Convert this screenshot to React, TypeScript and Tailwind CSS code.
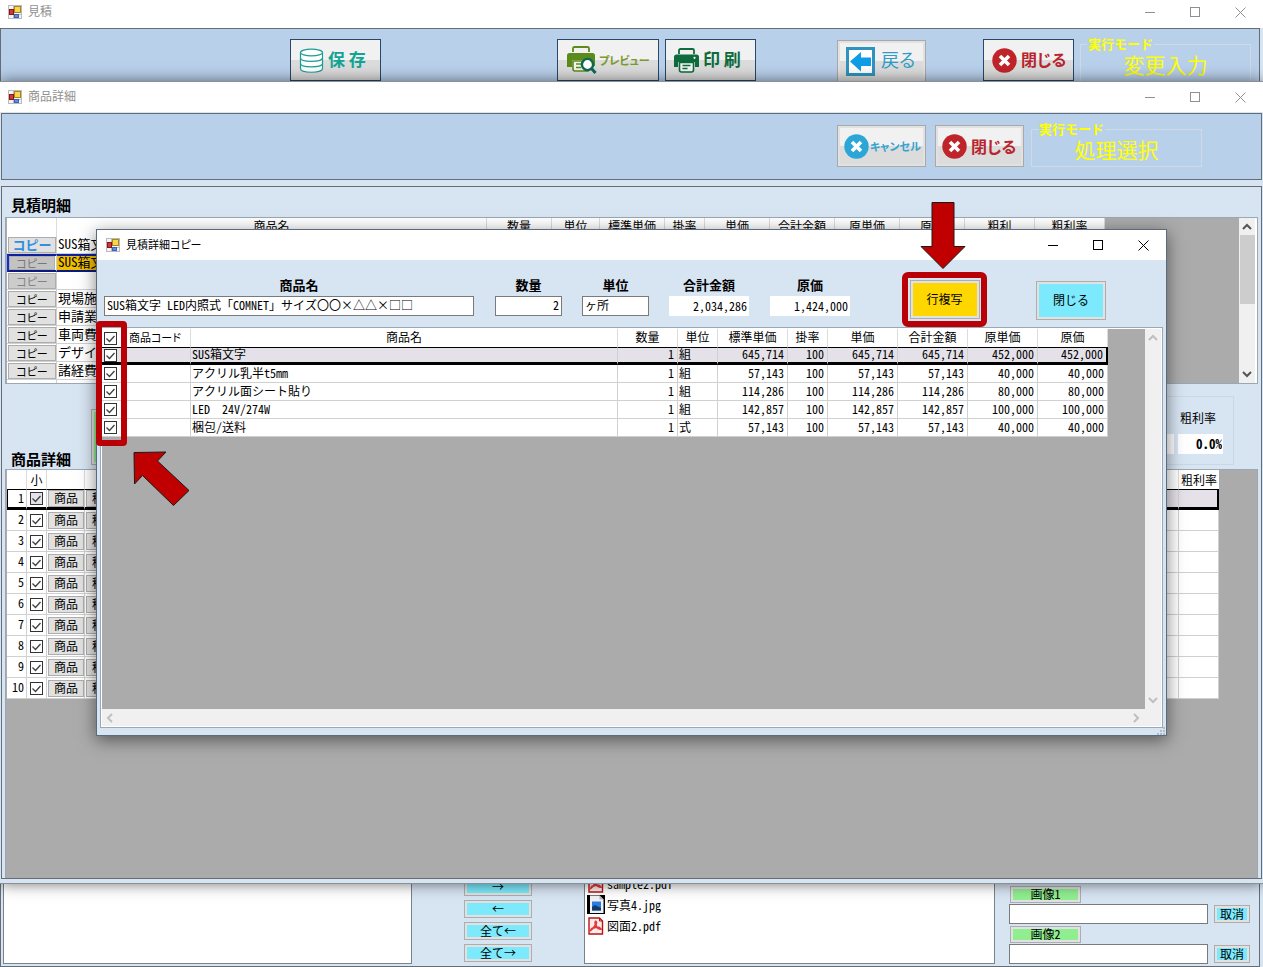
import React from "react";

function AppIcon() {
  return (
    <svg width="14" height="14" viewBox="0 0 14 14" className="shrink-0" aria-hidden="true">
      <rect x="0.5" y="0.5" width="13" height="13" fill="#f4f4f6" stroke="#b9b9be" />
      <path d="M5.5 1v12M1 9.5h12" stroke="#b9b9be" />
      <rect x="1.5" y="4.5" width="4" height="5" fill="#c93a3a" stroke="#8c1515" />
      <rect x="6.5" y="1.5" width="6" height="6" fill="#f9d54a" stroke="#a8861c" />
      <rect x="6.5" y="9.5" width="4" height="3" fill="#5b8fe8" stroke="#3c63b4" />
    </svg>
  );
}

function TitleBar({ title, active = false, className = "" }: { title: string; active?: boolean; className?: string }) {
  const tone = active ? "text-black" : "text-[#909090]";
  const size = active ? "text-[11px]" : "text-xs";
  return (
    <header className={`flex shrink-0 items-center bg-white ${tone} ${className}`}>
      <AppIcon />
      <h1 className={`ml-1.5 flex-1 pb-0.5 [font-family:'Noto_Sans_CJK_JP',sans-serif] leading-4 [font-feature-settings:'palt'] ${size}`}>{title}</h1>
      <button type="button" aria-label="最小化" className="flex h-6 w-[45px] items-center justify-center">
        <svg width="11" height="11"><path d="M0 5.5h10" stroke="currentColor" /></svg>
      </button>
      <button type="button" aria-label="最大化" className="flex h-6 w-[45px] items-center justify-center">
        <svg width="11" height="11"><rect x="0.5" y="0.5" width="9" height="9" fill="none" stroke="currentColor" /></svg>
      </button>
      <button type="button" aria-label="ウィンドウを閉じる" className="flex h-6 w-[45px] items-center justify-center">
        <svg width="11" height="11"><path d="M0.5 0.5l10 10M10.5 0.5l-10 10" stroke="currentColor" /></svg>
      </button>
    </header>
  );
}

function Check({ label, dim = false }: { label: string; dim?: boolean }) {
  return (
    <span className="relative block size-[13px]">
      <input
        type="checkbox"
        defaultChecked
        aria-label={label}
        className={`block size-[13px] appearance-none border border-[#333333] ${dim ? "bg-[#e4e2e8]" : "bg-white"}`}
      />
      <svg viewBox="0 0 13 13" className="pointer-events-none absolute inset-0 size-[13px]">
        <path d="M2.5 6.5l3 3 5-5.5" fill="none" stroke="#404040" strokeWidth="1.3" />
      </svg>
    </span>
  );
}

function Circled({ color }: { color: string }) {
  return (
    <svg width="25" height="25" viewBox="0 0 25 25" className="shrink-0">
      <circle cx="12.5" cy="12.5" r="12.2" fill={color} />
      <path d="M8 8l9 9M17 8l-9 9" stroke="#fff" strokeWidth="3.6" />
    </svg>
  );
}

function DatabaseIcon() {
  return (
    <svg width="25" height="25" viewBox="0 0 25 25" fill="#fff" stroke="#1a9f93" strokeWidth="1.2" className="shrink-0">
      <path d="M1.5 4.5v16c0 5 22 5 22 0v-16" />
      <ellipse cx="12.5" cy="4.5" rx="11" ry="3.4" />
      <path d="M1.5 10c0 4.5 22 4.5 22 0M1.5 15.5c0 4.5 22 4.5 22 0" fill="none" />
    </svg>
  );
}

function PrinterIcon() {
  return (
    <svg width="25" height="25" viewBox="0 0 25 25" className="shrink-0">
      <path d="M5 6V2.500Q5 1 6.500 1h12Q20 1 20 2.500V6" fill="none" stroke="#0d6b3c" strokeWidth="1.8" />
      <path d="M2.5 6.500h20Q25 6.500 25 9v10h-4v-6h-17v6H0V9q0-2.500 2.500-2.500z" fill="#0d6b3c" />
      <path d="M0 9h25v5H0z" fill="#0d6b3c" />
      <circle cx="20.5" cy="9.8" r="1.100" fill="#fff" />
      <path d="M5.500 14.500h14V22q0 2-2 2h-10q-2 0-2-2z" fill="#f4f4f4" stroke="#0d6b3c" strokeWidth="1.600" />
      <path d="M8.500 17.500h8M8.500 20.500h5" stroke="#0d6b3c" strokeWidth="1.400" />
    </svg>
  );
}

function PreviewIcon() {
  return (
    <svg width="30" height="28" viewBox="0 0 30 28" className="shrink-0">
      <path d="M6 6V2.500Q6 1 7.500 1h13Q22 1 22 2.500V6" fill="none" stroke="#5c8a1c" strokeWidth="1.800" />
      <path d="M2.500 7h23Q28 7 28 9.500V20h-5v-6H5v7H0V9.500Q0 7 2.500 7z" fill="#5c8a1c" />
      <path d="M6 15h15v10H8q-2 0-2-2z" fill="#f4f4f4" stroke="#5c8a1c" strokeWidth="1.600" />
      <path d="M9 18h5M9 21.500h5" stroke="#5c8a1c" strokeWidth="1.400" />
      <circle cx="20.500" cy="18.500" r="5.600" fill="#fff" stroke="#0c6a52" strokeWidth="2.400" />
      <path d="M24.500 22.500l4 4.500" stroke="#0c6a52" strokeWidth="3" />
    </svg>
  );
}

function BackIcon() {
  return (
    <svg width="29" height="29" viewBox="0 0 29 29" className="shrink-0">
      <rect x="1.500" y="1.500" width="26" height="26" fill="#fff" stroke="#2f93bd" strokeWidth="3" />
      <path d="M4 14.500L15 5v5.500h10v8.500H15v5.500z" fill="#0e9de6" />
    </svg>
  );
}

const GLOSS = "bg-[linear-gradient(#f1f1f1_50%,#dcdcdc_50%)]";
const SHINE = "[font-family:'Noto_Sans_CJK_JP',sans-serif] font-bold";

function ToolButton({ flat = false, className = "", children }: { flat?: boolean; className?: string; children: React.ReactNode }) {
  const frame = flat ? "border-[#a9a9a9] ring-2 ring-inset ring-[#e1e1e1]" : "border-[#27486b]";
  return (
    <button type="button" className={`flex h-[42px] shrink-0 items-center border whitespace-nowrap ${frame} ${GLOSS} ${SHINE} ${className}`}>
      {children}
    </button>
  );
}

function ModeBox({ value, className = "" }: { value: string; className?: string }) {
  return (
    <fieldset className={`h-[45px] w-[171px] shrink-0 border border-[#d0dae4] text-[#ffff00] ${className}`}>
      <legend className="ml-1.5 px-px text-[13px] leading-[14px] font-bold">実行モード</legend>
      <output className="block pt-px text-center text-[21px] leading-6 font-medium">{value}</output>
    </fieldset>
  );
}

function Chevron({ dir, className = "" }: { dir: "up" | "down" | "left" | "right"; className?: string }) {
  const d = {
    up: "M1 7l4-4 4 4",
    down: "M1 3l4 4 4-4",
    left: "M7 1L3 5l4 4",
    right: "M3 1l4 4-4 4",
  }[dir];
  return (
    <svg width="10" height="10" viewBox="0 0 10 10" className={className}>
      <path d={d} fill="none" stroke="currentColor" strokeWidth="2" />
    </svg>
  );
}

const LINE_COLS = [65, 48, 65, 40, 65, 65, 65, 65, 70, 70];
const LINE_HEADS = ["数量", "単位", "標準単価", "掛率", "単価", "合計金額", "原単価", "原価", "粗利", "粗利率"];
const LINES = [
  { name: "SUS箱文字", state: "focus" },
  { name: "SUS箱文字", state: "selected" },
  { name: "", state: "disabled" },
  { name: "現場施工", state: "" },
  { name: "申請業務", state: "" },
  { name: "車両費", state: "" },
  { name: "デザイン", state: "" },
  { name: "諸経費", state: "" },
];

function LinesGrid() {
  return (
    <div className="mx-[3px] flex h-[167px] overflow-hidden border border-[#9aa7b4] bg-[#ababab] pl-px">
      <div className="min-w-0 flex-1 overflow-hidden pr-[134px]">
        <table className="w-full table-fixed border-separate border-spacing-0 bg-white text-xs leading-3">
          <colgroup>
            <col style={{ width: 50 }} />
            <col />
            {LINE_COLS.map((w, i) => <col key={i} style={{ width: w }} />)}
          </colgroup>
          <thead>
            <tr className="h-[18px]">
              <th className="border-r border-[#dcdcdc] p-0" />
              <th className="border-r border-[#dcdcdc] p-0 pb-0.5 font-normal">商品名</th>
              {LINE_HEADS.map((h) => <th key={h} className="border-r border-[#dcdcdc] p-0 pb-0.5 font-normal">{h}</th>)}
            </tr>
          </thead>
          <tbody>
            {LINES.map((r, i) => {
              const sel = r.state === "selected";
              const edge = sel ? "border-t-2 border-b-2 border-t-[#10209a] border-b-[#0a1a80]" : "border-b border-b-[#d0d0d0]";
              const btn =
                r.state === "focus" ? "bg-[#e1e1e1] text-[#2f8fe0] text-[13px] font-bold"
                : sel ? "bg-[#c3c3c3] text-[#777777] text-[11px] [font-feature-settings:'palt']"
                : r.state === "disabled" ? "bg-[#cccccc] text-[#838383] text-[11px] [font-feature-settings:'palt']"
                : "bg-[#e1e1e1] text-[11px] [font-feature-settings:'palt']";
              return (
                <tr key={i} className="h-[18px]">
                  <td className={`border-r border-r-[#d0d0d0] p-0 ${edge} ${sel ? "border-l-2 border-l-[#1030d0]" : ""}`}>
                    <button
                      type="button"
                      className={`block border border-[#adadad] [font-family:'Noto_Sans_CJK_JP',sans-serif] ${sel ? "h-[14px] w-[46px] leading-3" : "ml-px h-4 w-[48px] leading-[14px]"} ${btn}`}
                    >
                      コピー
                    </button>
                  </td>
                  <td className={`overflow-hidden border-r border-r-[#d0d0d0] p-0 pb-0.5 pl-px text-[13px] whitespace-nowrap ${edge} ${sel ? "bg-[#f0c000]" : ""}`}>{r.name}</td>
                  {LINE_COLS.map((_, c) => <td key={c} className={`border-r border-r-[#d0d0d0] p-0 ${edge} ${sel ? "bg-[#f0c000]" : ""}`} />)}
                </tr>
              );
            })}
            <tr className="h-[18px]">
              <td className="border-r border-[#d0d0d0] p-0" />
              <td colSpan={11} className="p-0" />
            </tr>
          </tbody>
        </table>
      </div>
      <div className="flex w-[18px] flex-col items-center border-r-2 border-white bg-[#f0f0f0] pt-1 pb-1 text-[#555555]">
        <Chevron dir="up" />
        <div className="mt-[3px] h-[69px] w-[15px] bg-[#cdcdcd]" />
        <Chevron dir="down" className="mt-auto" />
      </div>
    </div>
  );
}

function DetailGrid() {
  return (
    <div className="mx-[3px] min-h-0 flex-1 overflow-hidden border border-b-0 border-[#9aa7b4] bg-[#ababab] pr-[38px] pl-px">
      <table className="w-full table-fixed border-separate border-spacing-0 bg-white text-xs leading-[14px]">
        <colgroup>
          <col style={{ width: 20 }} />
          <col style={{ width: 20 }} />
          <col style={{ width: 38 }} />
          <col style={{ width: 38 }} />
          <col />
          <col style={{ width: 40 }} />
        </colgroup>
        <thead>
          <tr className="h-[19px]">
            <th className="border-r border-[#dcdcdc] p-0" />
            <th className="border-r border-[#dcdcdc] p-0 font-normal">小</th>
            <th className="border-r border-[#dcdcdc] p-0" />
            <th className="border-r border-[#dcdcdc] p-0" />
            <th className="border-r border-[#dcdcdc] p-0" />
            <th className="p-0 font-normal">粗利率</th>
          </tr>
        </thead>
        <tbody>
          {Array.from({ length: 10 }, (_, i) => {
            const first = i === 0;
            const edge = first ? "border-t border-b-[3px] border-t-black border-b-black" : "border-b border-b-[#d0d0d0]";
            const fill = first ? "bg-[#e4e2e8]" : "";
            const btn = "block h-[17px] w-[36px] border border-[#adadad] bg-[#e1e1e1] pb-px leading-[14px]";
            return (
              <tr key={i} className="h-[21px]">
                <td className={`border-r border-r-[#d0d0d0] p-0 pr-0.5 pb-0.5 text-right ${edge} ${first ? "border-l border-l-black" : ""}`}>{i + 1}</td>
                <td className={`border-r border-r-[#d0d0d0] p-0 pl-[3px] ${edge}`}><Check label={`小 ${i + 1}`} dim={first} /></td>
                <td className={`border-r border-r-[#d0d0d0] p-0 pl-px ${edge}`}><button type="button" className={btn}>商品</button></td>
                <td className={`border-r border-r-[#d0d0d0] p-0 pl-px ${edge}`}><button type="button" className={btn}>積算</button></td>
                <td className={`border-r border-r-[#d0d0d0] p-0 ${edge} ${fill}`} />
                <td className={`p-0 ${edge} ${fill} ${first ? "border-r-2 border-r-black" : "border-r border-r-[#d0d0d0]"}`} />
              </tr>
            );
          })}
        </tbody>
      </table>
    </div>
  );
}

const COPY_COLS = [60, 40, 70, 40, 70, 70, 70, 70];
const COPY_HEADS = ["数量", "単位", "標準単価", "掛率", "単価", "合計金額", "原単価", "原価"];
const COPY_ROWS = [
  ["SUS箱文字", "1", "組", "645,714", "100", "645,714", "645,714", "452,000", "452,000"],
  ["アクリル乳半t5mm", "1", "組", "57,143", "100", "57,143", "57,143", "40,000", "40,000"],
  ["アクリル面シート貼り", "1", "組", "114,286", "100", "114,286", "114,286", "80,000", "80,000"],
  ["LED　24V/274W", "1", "組", "142,857", "100", "142,857", "142,857", "100,000", "100,000"],
  ["梱包/送料", "1", "式", "57,143", "100", "57,143", "57,143", "40,000", "40,000"],
];

function CopyGrid() {
  return (
    <div className="mx-[3px] mb-[7px] flex min-h-0 flex-1 flex-col border border-[#9aa7b4] bg-white p-px">
      <div className="flex min-h-0 flex-1">
        <div className="min-w-0 flex-1 bg-[#ababab] pr-[37px]">
          <table className="w-full table-fixed border-separate border-spacing-0 bg-white text-xs leading-3">
            <colgroup>
              <col style={{ width: 18 }} />
              <col style={{ width: 71 }} />
              <col />
              {COPY_COLS.map((w, i) => <col key={i} style={{ width: w }} />)}
            </colgroup>
            <thead>
              <tr className="h-[18px]">
                <th className="p-0 pl-0.5"><Check label="すべて選択" /></th>
                <th className="border-r border-[#dcdcdc] p-0 pb-0.5 [font-family:'Noto_Sans_CJK_JP',sans-serif] text-[11px] font-normal [font-feature-settings:'palt']">商品コード</th>
                <th className="border-r border-[#dcdcdc] p-0 pb-0.5 font-normal">商品名</th>
                {COPY_HEADS.map((h) => <th key={h} className="border-r border-[#dcdcdc] p-0 pb-0.5 font-normal">{h}</th>)}
              </tr>
            </thead>
            <tbody>
              {COPY_ROWS.map((row, i) => {
                const first = i === 0;
                const edge = first
                  ? "border-t border-b-[3px] border-t-black border-b-black bg-[#e4e2e8]"
                  : "border-b border-b-[#d0d0d0]";
                return (
                  <tr key={i} className="h-[18px]">
                    <td className={`p-0 pl-0.5 ${edge}`}><Check label={row[0]} /></td>
                    <td className={`border-r border-r-[#d0d0d0] p-0 ${edge}`} />
                    {row.map((v, c) => (
                      <td
                        key={c}
                        className={`p-0 pb-0.5 whitespace-nowrap ${edge} ${first && c === 8 ? "border-r-2 border-r-black" : "border-r border-r-[#d0d0d0]"} ${c === 0 || c === 2 ? "pl-px text-left" : "pr-[3px] text-right"}`}
                      >
                        {v}
                      </td>
                    ))}
                  </tr>
                );
              })}
            </tbody>
          </table>
        </div>
        <div className="flex w-4 flex-col items-center justify-between bg-[#f0f0f0] py-1 text-[#bfbfbf]">
          <Chevron dir="up" />
          <Chevron dir="down" />
        </div>
      </div>
      <div className="flex h-[17px] items-center justify-between bg-[#f0f0f0] pr-[20px] pl-[3px] text-[#bfbfbf]">
        <Chevron dir="left" />
        <Chevron dir="right" />
      </div>
    </div>
  );
}

function Field({ id, label, value, boxed, right, labelClass = "", className }: { id: string; label: string; value: string; boxed?: boolean; right?: boolean; labelClass?: string; className: string }) {
  return (
    <div className={`flex flex-col pb-[11px] ${className}`}>
      <label htmlFor={id} className={`pb-[3px] text-center text-[13px] leading-4 font-bold ${labelClass}`}>{label}</label>
      <input
        id={id}
        defaultValue={value}
        readOnly={!boxed}
        className={`h-5 w-full bg-white px-0.5 text-xs leading-4 ${boxed ? "border border-[#7a7a7a] pb-1" : "pb-px"} ${right ? "text-right" : ""}`}
      />
    </div>
  );
}

function CopyDialog() {
  return (
    <section
      role="dialog"
      aria-label="見積詳細コピー"
      className="absolute inset-x-24 top-[229px] flex h-[507px] flex-col border border-[#5b6b7b] bg-[#d7e4f2] shadow-[0_4px_16px_rgba(0,0,0,0.5)]"
    >
      <TitleBar title="見積詳細コピー" active className="h-[30px] pl-[9px]" />
      <div className="flex h-[67px] shrink-0 items-end pr-[60px] pl-[7px]">
        <Field id="name" label="商品名" value="SUS箱文字 LED内照式「COMNET」サイズ〇〇×△△×□□" boxed labelClass="pl-5" className="mr-[21px] flex-1" />
        <Field id="qty" label="数量" value="2" boxed right className="mr-5 w-[67px]" />
        <Field id="unit" label="単位" value="ヶ所" boxed className="mr-5 w-[67px]" />
        <Field id="total" label="合計金額" value="2,034,286" right className="mr-[21px] w-20" />
        <Field id="cost" label="原価" value="1,424,000" right className="mr-[52px] w-20" />
        <div className="mr-[49px] flex h-[55px] w-[85px] shrink-0 items-center justify-center rounded-md border-[6px] border-[#b90007]">
          <button type="button" className="h-[39px] w-[70px] border border-[#adadad] bg-[#ffd700] pb-0.5 text-xs ring-2 ring-[#e1e1e1] ring-inset">行複写</button>
        </div>
        <button type="button" className="mb-[7px] h-[39px] w-[70px] shrink-0 border border-[#adadad] bg-[#7ceafc] pb-0.5 text-xs ring-2 ring-[#e1e1e1] ring-inset">閉じる</button>
      </div>
      <CopyGrid />
      <svg width="10" height="8" className="absolute right-0 bottom-0 text-[#b3bcc6]" fill="currentColor">
        <path d="M7 0h2v2H7zM4 3h2v2H4zM7 3h2v2H7zM1 6h2v2H1zM4 6h2v2H4zM7 6h2v2H7z" />
      </svg>
      <div className="pointer-events-none absolute top-[91px] -left-px h-[125px] w-[31px] rounded-[4px] border-[6px] border-[#b90007]" />
      <svg width="57" height="56" className="absolute top-[221px] left-[36px]">
        <path d="M1 1.500L33 1 24.500 10 56 39.500 40.500 54.500 9.500 24.500 1.500 33z" fill="#c00000" stroke="#1a1a1a" />
      </svg>
      <svg width="46" height="68" className="absolute -top-7 right-[200px]">
        <path d="M12 0.500h22v44h11L23 66.500 1 44.500h11z" fill="#c00000" stroke="#1a1a1a" />
      </svg>
    </section>
  );
}

function DetailWindow() {
  return (
    <section
      aria-label="商品詳細"
      className="absolute inset-x-0 top-[81px] bottom-[83px] flex flex-col border-t border-b border-[#8a9096] bg-[#d7e4f2] shadow-[0_0_14px_rgba(0,0,0,0.55)]"
    >
      <TitleBar title="商品詳細" className="h-[30px] pl-2" />
      <div className="mx-px mt-px flex h-[67px] shrink-0 items-start justify-end border border-[#666d75] bg-[#b9d0eb] pt-[11px] pr-[59px]">
        <ToolButton flat className="mr-[9px] w-[89px] gap-px pl-1.5 text-[11px] text-[#35a2cf]">
          <Circled color="#2ba6d6" />
          <span className="[font-feature-settings:'palt']">キャンセル</span>
        </ToolButton>
        <ToolButton flat className="mr-[7px] w-[89px] gap-1 pl-1.5 text-base text-[#b9252d]">
          <Circled color="#c0242b" />
          <span className="[font-feature-settings:'palt']">閉じる</span>
        </ToolButton>
        <ModeBox value="処理選択" className="-mt-[3px]" />
      </div>
      <main className="mx-px mt-1.5 mb-1 flex min-h-0 flex-1 flex-col border border-[#666d75]">
        <h2 className="mt-[9px] mb-[3px] ml-[9px] h-[18px] shrink-0 text-[15px] leading-[18px] font-bold">見積明細</h2>
        <LinesGrid />
        <div className="flex h-[85px] shrink-0 items-end">
          <h2 className="mb-px ml-[9px] text-[15px] leading-[18px] font-bold">商品詳細</h2>
          <div className="mb-1 ml-5 h-[56px] w-24 border border-[#adadad] bg-[#90ee90] ring-2 ring-[#e1e1e1] ring-inset" />
          <div className="mr-[27px] mb-1 ml-auto flex h-[69px] items-end gap-1 border border-[#cbd8e2] pr-2.5 pb-2.5 pl-2">
            <div className="h-5 w-14 bg-white" />
            <div className="flex flex-col">
              <label htmlFor="margin" className="pb-2 pl-0.5 text-xs leading-4">粗利率</label>
              <input id="margin" readOnly defaultValue="0.0%" className="h-5 w-[45px] bg-white pr-px pb-0.5 text-right text-[13px] font-bold" />
            </div>
          </div>
        </div>
        <DetailGrid />
      </main>
    </section>
  );
}

function PdfIcon() {
  return (
    <svg width="18" height="18" viewBox="0 0 18 18" className="shrink-0">
      <path d="M2 1h10.500l3 3v13H2z" fill="#fdecea" stroke="#b81414" strokeWidth="1.400" />
      <path d="M12.500 1v3h3" fill="none" stroke="#b81414" />
      <path d="M8.600 4.500c1.800 0 .4 5-4.600 8.500.8-3 8-3.800 9.800-1-3 1-6.500-4.500-5.200-7.500z" fill="none" stroke="#e0393e" strokeWidth="1.900" />
    </svg>
  );
}

function ImageFileIcon() {
  return (
    <svg width="18" height="19" viewBox="0 0 18 19" className="shrink-0">
      <rect width="18" height="19" fill="#000" />
      <path d="M3 0.500h9.500l4 4V18H3z" fill="#f2f2f2" />
      <path d="M12.500 0.500v4h4z" fill="#b5b5b5" />
      <rect x="5" y="6.500" width="9" height="9" fill="#2a7de1" />
      <path d="M5 15.500v-3.500l3-2 6 3v2.500z" fill="#123a6b" />
    </svg>
  );
}

const FILES = [
  { name: "sample2.pdf", icon: <PdfIcon /> },
  { name: "写真4.jpg", icon: <ImageFileIcon /> },
  { name: "図面2.pdf", icon: <PdfIcon /> },
];

function CyanButton({ className = "", children }: { className?: string; children: React.ReactNode }) {
  return (
    <button type="button" className={`h-[18px] border border-[#adadad] bg-[#7ceafc] pb-px text-xs leading-[15px] ring-2 ring-[#e1e1e1] ring-inset ${className}`}>
      {children}
    </button>
  );
}

function EstimateWindow() {
  return (
    <section aria-label="見積" className="flex flex-1 flex-col bg-[#d7e4f2]">
      <TitleBar title="見積" className="h-6 pl-2" />
      <div className="h-1 shrink-0 bg-white" />
      <div className="mr-[3px] flex flex-1 flex-col border border-[#666d75]">
        <div className="flex h-20 shrink-0 items-start bg-[#b9d0eb] pt-2.5 pr-2">
          <ToolButton className="ml-[289px] w-[91px] gap-1 pl-2 text-[17px] text-[#12a594]">
            <DatabaseIcon />
            <span className="pb-0.5">保 存</span>
          </ToolButton>
          <ToolButton className="ml-[176px] w-[102px] gap-0.5 pl-[9px] text-[11px] text-[#7a9a2e]">
            <PreviewIcon />
            <span className="[font-feature-settings:'palt']">プレビュー</span>
          </ToolButton>
          <ToolButton className="ml-1.5 w-[91px] gap-1 pl-2 text-[17px] text-[#0d6b3c]">
            <PrinterIcon />
            <span className="pb-0.5">印 刷</span>
          </ToolButton>
          <ToolButton flat className="mt-px ml-auto w-[89px] gap-1.5 pl-2 text-lg text-[#2e9cc6]">
            <BackIcon />
            <span className="pb-1 font-normal [font-feature-settings:'palt']">戻る</span>
          </ToolButton>
          <ToolButton className="ml-[57px] w-[91px] gap-1 pl-2 text-base text-[#b9252d]">
            <Circled color="#c0242b" />
            <span className="pb-0.5 [font-feature-settings:'palt']">閉じる</span>
          </ToolButton>
          <ModeBox value="変更入力" className="-mt-0.5 ml-1.5" />
        </div>
        <div className="mt-auto flex h-[104px] pr-[9px] pb-0.5 pl-0.5">
          <div className="flex-1 border border-[#7a828a] bg-white" />
          <div className="mx-[52px] flex w-[68px] flex-col justify-end gap-1 pb-0.5">
            <CyanButton>→</CyanButton>
            <CyanButton>←</CyanButton>
            <CyanButton>全て←</CyanButton>
            <CyanButton>全て→</CyanButton>
          </div>
          <ul className="flex flex-1 flex-col justify-end border border-[#7a828a] bg-white pb-[27px] pl-0.5 text-xs">
            {FILES.map((f) => (
              <li key={f.name} className="flex h-[21px] items-center gap-0.5">
                {f.icon}
                <span>{f.name}</span>
              </li>
            ))}
          </ul>
          <div className="ml-[14px] flex w-[241px] flex-col justify-end">
            <div className="h-5 w-[199px] border border-[#7a7a7a] bg-white" />
            {["画像1", "画像2"].map((t) => (
              <div key={t} className="flex flex-col">
                <button type="button" className="mt-0.5 mb-px ml-px h-[17px] w-[71px] border border-[#adadad] bg-[#90ee90] pb-px text-xs leading-[14px] ring-2 ring-[#e1e1e1] ring-inset">{t}</button>
                <div className="flex items-center">
                  <input aria-label={t} className="h-5 w-[199px] border border-[#7a7a7a] bg-white px-1 text-xs" />
                  <CyanButton className="ml-1.5 w-9">取消</CyanButton>
                </div>
              </div>
            ))}
          </div>
        </div>
      </div>
    </section>
  );
}

export default function App() {
  return (
    <div className="relative flex h-screen flex-col overflow-hidden text-black [font-family:'Noto_Sans_Mono_CJK_JP','Noto_Sans_CJK_JP',monospace]">
      <EstimateWindow />
      <DetailWindow />
      <CopyDialog />
    </div>
  );
}
